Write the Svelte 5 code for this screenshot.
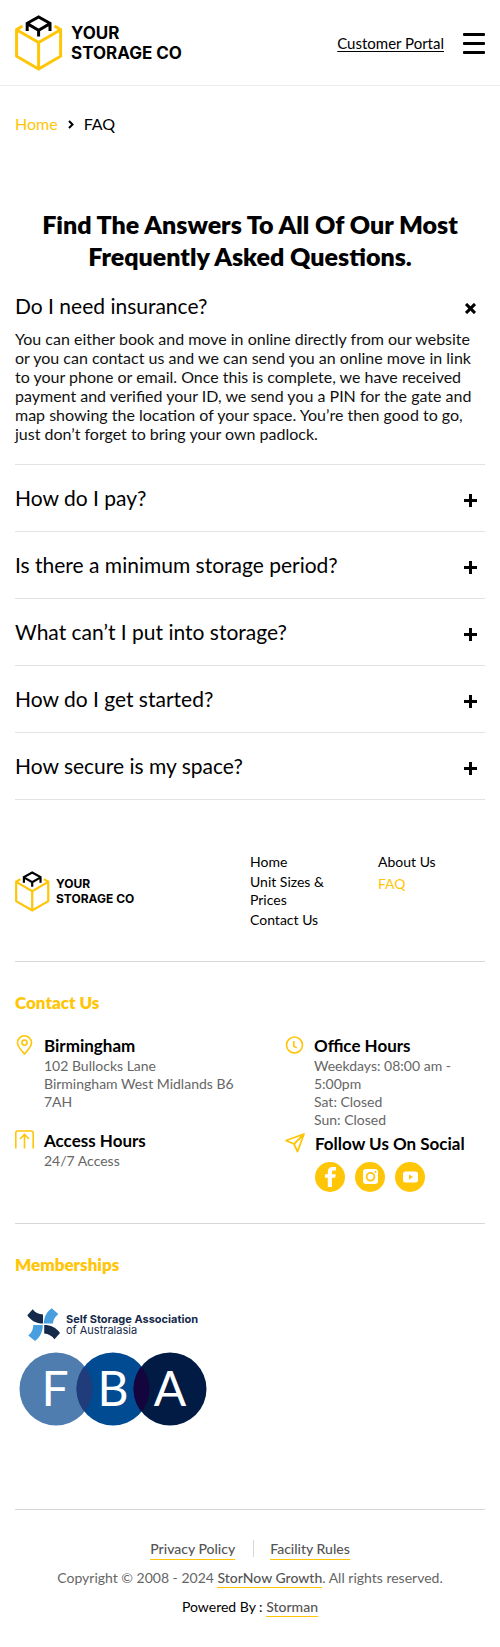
<script lang="ts">
  interface Faq {
    question: string
    answer: string
  }

  const faqs: Faq[] = [
    {
      question: 'Do I need insurance?',
      answer:
        'You can either book and move in online directly from our website or you can contact us and we can send you an online move in link to your phone or email. Once this is complete, we have received payment and verified your ID, we send you a PIN for the gate and map showing the location of your space. You’re then good to go, just don’t forget to bring your own padlock.',
    },
    { question: 'How do I pay?', answer: '' },
    { question: 'Is there a minimum storage period?', answer: '' },
    { question: 'What can’t I put into storage?', answer: '' },
    { question: 'How do I get started?', answer: '' },
    { question: 'How secure is my space?', answer: '' },
  ]

  const navColumns = [
    ['Home', 'Unit Sizes & Prices', 'Contact Us'],
    ['About Us', 'FAQ'],
  ]

  let openIndex = $state(0)

  function toggle(index: number): void {
    openIndex = openIndex === index ? -1 : index
  }
</script>

{#snippet logo()}
  <svg class="logo-mark" viewBox="0 0 48 56" fill="none" stroke-width="3" aria-hidden="true">
    <path
      d="M7.5 11 1.6 14.6v26.6l22 12.8 22-12.8V14.6L39.5 11M1.6 14.8l22 12.8 22-12.8M23.6 27.6V54"
      stroke="#ffc507"
    />
    <path d="M12.2 16V8.3L23.6 2 35 8.3V16M12.2 8.6l11.4 6.6L35 8.6M23.6 15v6.6" stroke="#000" />
  </svg>
  <span class="logo-text">YOUR<br />STORAGE CO</span>
{/snippet}

<header class="header">
  <a class="logo" href="/">{@render logo()}</a>
  <div class="header-actions">
    <a class="portal" href="/portal">Customer Portal</a>
    <button class="menu" aria-label="Open menu">
      <span></span>
      <span></span>
      <span></span>
    </button>
  </div>
</header>

<nav class="breadcrumb" aria-label="Breadcrumb">
  <a href="/">Home</a>
  <svg width="6" height="9" viewBox="0 0 6 9" fill="none" stroke="#000" stroke-width="2" aria-hidden="true">
    <path d="m1 1 3.5 3.5L1 8" />
  </svg>
  <span>FAQ</span>
</nav>

<main class="faq">
  <h1>Find The Answers To All Of Our Most Frequently Asked Questions.</h1>
  {#each faqs as faq, index}
    <section class="faq-item" class:open={openIndex === index}>
      <h2>
        <button class="faq-question" aria-expanded={openIndex === index} onclick={() => toggle(index)}>
          <span>{faq.question}</span>
          <svg class="faq-icon" viewBox="0 0 13 13" stroke="#000" stroke-width="3" aria-hidden="true">
            <path d="M6.5 0v13M0 6.5h13" />
          </svg>
        </button>
      </h2>
      {#if openIndex === index && faq.answer}
        <p>{faq.answer}</p>
      {/if}
    </section>
  {/each}
</main>

<footer class="footer">
  <div class="footer-top">
    <a class="logo small" href="/">{@render logo()}</a>
    <nav class="footer-nav" aria-label="Footer">
      {#each navColumns as column}
        <ul>
          {#each column as label}
            <li><a href="/" class:active={label === 'FAQ'}>{label}</a></li>
          {/each}
        </ul>
      {/each}
    </nav>
  </div>

  <div class="contact">
    <h3>Contact Us</h3>
    <div class="contact-grid">
      <div class="contact-column">
        <div class="contact-item">
          <svg width="19" height="20" viewBox="0 0 19 20" fill="none" stroke="#ffc507" stroke-width="1.6" aria-hidden="true">
            <path d="M9.5 19C5.5 14.6 2.5 11.5 2.5 7.8a7 7 0 0 1 14 0c0 3.7-3 6.8-7 11.2z" />
            <circle cx="9.5" cy="7.6" r="2.6" />
          </svg>
          <div>
            <h4>Birmingham</h4>
            <p>102 Bullocks Lane<br />Birmingham West Midlands B6 7AH</p>
          </div>
        </div>
        <div class="contact-item">
          <svg width="19" height="20" viewBox="0 0 19 20" fill="none" stroke="#ffc507" stroke-width="1.6" aria-hidden="true">
            <path d="M.8 18.5V3Q.8 1 2.8 1h13.4q2 0 2 2v15.5M9.5 18.5V5M5 9l4.500-4.500L14 9" />
          </svg>
          <div>
            <h4>Access Hours</h4>
            <p>24/7 Access</p>
          </div>
        </div>
      </div>
      <div class="contact-column compact">
        <div class="contact-item">
          <svg width="19" height="20" viewBox="0 0 19 20" fill="none" stroke="#ffc507" stroke-width="1.6" aria-hidden="true">
            <circle cx="9.5" cy="10" r="8" />
            <path d="M8.8 6v5.200l3 1.700" />
          </svg>
          <div>
            <h4>Office Hours</h4>
            <p>Weekdays: 08:00 am - 5:00pm<br />Sat: Closed<br />Sun: Closed</p>
          </div>
        </div>
        <div class="contact-item">
          <svg width="20" height="20" viewBox="0 0 20 20" fill="none" stroke="#ffc507" stroke-width="1.8" stroke-linejoin="round" aria-hidden="true">
            <path d="M19 1 1 7.5l8 3.500 3.500 7.500zM9 11l10-10" />
          </svg>
          <div>
            <h4>Follow Us On Social</h4>
            <div class="social">
              <a href="/facebook" aria-label="Facebook">
                <svg viewBox="0 0 30 30" aria-hidden="true">
                  <path fill="#fff" d="M12.8 25v-9.200H10v-3.600h2.800V9.800c0-3 1.700-4.700 4.500-4.700H21v3.500h-2.200c-1.400 0-1.900.6-1.900 1.900v1.700h3.900l-.6 3.600h-3.300V25z" />
                </svg>
              </a>
              <a href="/instagram" aria-label="Instagram">
                <svg viewBox="0 0 30 30" aria-hidden="true">
                  <rect x="8" y="7" width="15" height="15" rx="3" fill="#fff" />
                  <circle cx="15.5" cy="14.8" r="3.9" fill="none" stroke="#ffc507" stroke-width="1.8" />
                  <circle cx="20.5" cy="9.8" r="1" fill="#ffc507" />
                </svg>
              </a>
              <a href="/youtube" aria-label="YouTube">
                <svg viewBox="0 0 30 30" aria-hidden="true">
                  <rect x="8" y="9.5" width="15" height="11" rx="2.5" fill="#fff" />
                  <path d="m14 12.600 4 2.400-4 2.400z" fill="#ffc507" />
                </svg>
              </a>
            </div>
          </div>
        </div>
      </div>
    </div>
  </div>

  <div class="members">
    <h3>Memberships</h3>
    <div class="ssa">
      <svg width="34" height="34" viewBox="0 0 34 34" aria-hidden="true">
        <path fill="#152a4a" d="M5.7 1.2C8 4.500 11.500 6 16 6.500v9C9 15.500 4 12.500.3 7.200zM17.200 17c6.500 0 12 2.500 15.800 8l-5.500 6.200c-3-3.700-6-5.200-10.300-5.700z" />
        <path fill="#479fe0" d="M24.700.2l6.600 5.800c-3.500 3.500-4.800 5-5.300 9.500h-9.200C17 9 19.500 4 24.700.2zM15.800 17c0 6.500-2.500 12-7.800 16l-6.700-5.500C5 24.500 6 21.500 6.300 17z" />
      </svg>
      <div class="ssa-text"><strong>Self Storage Association</strong><br />of Australasia</div>
    </div>
    <svg class="fba" width="188" height="74" viewBox="0 0 188 74" role="img" aria-label="FBA">
      <clipPath id="fba-middle"><circle cx="94" cy="37" r="36.5" /></clipPath>
      <circle cx="37" cy="37" r="36.5" fill="#4f7db0" />
      <circle cx="94" cy="37" r="36.5" fill="#004b91" />
      <circle cx="151" cy="37" r="36.5" fill="#021b44" />
      <g clip-path="url(#fba-middle)">
        <circle cx="37" cy="37" r="36.5" fill="#213c7a" />
        <circle cx="151" cy="37" r="36.5" fill="#14053f" />
      </g>
      <text x="36" y="54">F</text>
      <text x="94" y="54">B</text>
      <text x="151" y="54">A</text>
    </svg>
  </div>

  <div class="legal">
    <div class="legal-links">
      <a href="/privacy">Privacy Policy</a>
      <span class="divider"></span>
      <a href="/rules">Facility Rules</a>
    </div>
    <p>Copyright © 2008 - 2024 <a href="/growth">StorNow Growth</a>. All rights reserved.</p>
    <p class="powered">Powered By : <a href="/storman">Storman</a></p>
  </div>
</footer>

<style>
  :global(body) {
    background: #fff;
    color: #000;
    font-family: Lato, 'Open Sans', sans-serif;
    font-size: 16px;
  }

  h1,
  h2,
  h3,
  h4,
  p,
  ul {
    margin: 0;
    padding: 0;
  }

  a {
    color: inherit;
    text-decoration: none;
  }

  button {
    padding: 0;
    border: none;
    background: none;
    color: inherit;
    font: inherit;
    cursor: pointer;
  }

  .header {
    display: flex;
    align-items: center;
    justify-content: space-between;
    padding: 15px 15px 14px;
    border-bottom: 1px solid #ececec;
  }

  .logo {
    display: flex;
    align-items: center;
    gap: 8px;
  }

  .logo-mark {
    width: 48px;
    height: 56px;
  }

  .logo-text {
    font-family: Inter, sans-serif;
    font-size: 17px;
    font-weight: 700;
    line-height: 20px;
  }

  .logo.small {
    gap: 6px;
  }

  .small .logo-mark {
    width: 35px;
    height: 41px;
  }

  .small .logo-text {
    font-size: 12px;
    line-height: 15px;
  }

  .header-actions {
    display: flex;
    align-items: center;
    gap: 19px;
  }

  .portal {
    font-size: 15px;
    text-decoration: underline;
    text-underline-offset: 2px;
  }

  .menu {
    display: flex;
    flex-direction: column;
    gap: 6px;
    width: 22px;
  }

  .menu span {
    height: 3px;
    border-radius: 1px;
    background: #000;
  }

  .breadcrumb {
    display: flex;
    align-items: center;
    gap: 10px;
    padding: 28px 15px 0;
    line-height: 20px;
  }

  .breadcrumb a {
    color: #ffc507;
  }

  .faq {
    padding: 74px 15px 0;
  }

  h1 {
    margin-bottom: 22px;
    font-size: 25px;
    font-weight: 800;
    line-height: 32px;
    text-align: center;
  }

  .faq-item {
    border-bottom: 1px solid #e2e2e2;
  }

  .faq-question {
    display: flex;
    align-items: center;
    justify-content: space-between;
    width: 100%;
    padding: 21px 8px 21px 0;
    font-size: 21px;
    font-weight: 400;
    line-height: 24px;
    text-align: left;
  }

  .faq-icon {
    width: 13px;
    height: 13px;
    margin-top: 4px;
  }

  .faq-item.open {
    padding-bottom: 21px;
  }

  .open .faq-question {
    padding-top: 0;
    padding-bottom: 11px;
  }

  .open .faq-icon {
    transform: rotate(45deg);
  }

  .faq-item p {
    color: #111;
    line-height: 19px;
  }

  .footer {
    padding: 51px 15px 28px;
  }

  .footer-top {
    display: grid;
    grid-template-columns: 1fr 1fr;
    align-items: center;
    padding-bottom: 30px;
    border-bottom: 1px solid #d8d8d8;
  }

  .footer-nav {
    display: grid;
    grid-template-columns: 1fr 1fr;
    column-gap: 21px;
  }

  .footer-nav ul {
    list-style: none;
  }

  .footer-nav a {
    display: flex;
    align-items: center;
    min-height: 22px;
    font-size: 14px;
    line-height: 18px;
  }

  .footer-nav .active {
    color: #ffc507;
  }

  h3 {
    color: #ffc507;
    font-size: 17px;
    font-weight: 800;
    line-height: 24px;
  }

  .contact,
  .members {
    padding-top: 29px;
    border-bottom: 1px solid #d8d8d8;
  }

  .contact {
    padding-bottom: 31px;
  }

  .contact-grid {
    display: grid;
    grid-template-columns: 27fr 20fr;
    margin-top: 20px;
  }

  .contact-column {
    display: flex;
    flex-direction: column;
    gap: 19px;
    padding-right: 30px;
  }

  .contact-column.compact {
    gap: 4px;
    padding-right: 0;
  }

  .contact-item {
    display: flex;
    gap: 10px;
  }

  .contact-item > svg {
    flex: none;
  }

  h4 {
    font-size: 17px;
    font-weight: 700;
    line-height: 22px;
  }

  .contact-item p {
    color: #666;
    font-size: 14px;
    line-height: 18px;
  }

  .social {
    display: flex;
    gap: 10px;
    margin-top: 7px;
  }

  .social a {
    width: 30px;
    height: 30px;
    border-radius: 50%;
    background: #ffc507;
  }

  .members {
    padding-bottom: 83px;
  }

  .ssa {
    display: flex;
    align-items: center;
    gap: 5px;
    margin: 31px 0 10px 12px;
  }

  .ssa-text {
    color: #152a4a;
    font-family: Inter, sans-serif;
    font-size: 11px;
    line-height: 11px;
  }

  .fba {
    display: block;
    margin-left: 4px;
  }

  .fba text {
    fill: #fff;
    font-size: 48px;
    text-anchor: middle;
  }

  .legal {
    padding-top: 30px;
    color: #666;
    font-size: 14px;
    line-height: 22px;
    text-align: center;
  }

  .legal a {
    padding-bottom: 1px;
    border-bottom: 1px solid #ffc507;
    color: #555;
    font-weight: 500;
  }

  .legal-links {
    display: flex;
    justify-content: center;
    margin-bottom: 7px;
    line-height: 18px;
  }

  .divider {
    width: 1px;
    height: 17px;
    margin: 0 16px 0 18px;
    background: #d8d8d8;
  }

  .legal p + p {
    margin-top: 7px;
  }

  .legal .powered {
    color: #000;
  }
</style>
